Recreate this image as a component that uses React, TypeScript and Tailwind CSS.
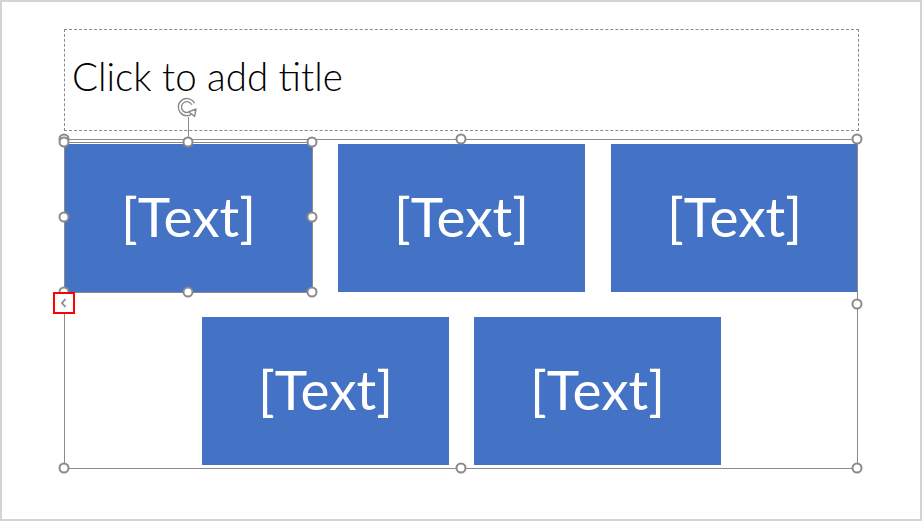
import React from "react";

const frameHandles = [
  "left-[0px] top-[0px]",
  "left-[397px] top-[0px]",
  "left-[793px] top-[0px]",
  "left-[0px] top-[165px]",
  "left-[793px] top-[165px]",
  "left-[0px] top-[329px]",
  "left-[397px] top-[329px]",
  "left-[793px] top-[329px]",
];

const shapeHandles = [
  "left-[0px] top-[3px]",
  "left-[124px] top-[3px]",
  "left-[248px] top-[3px]",
  "left-[0px] top-[78px]",
  "left-[248px] top-[78px]",
  "left-[0px] top-[153px]",
  "left-[124px] top-[153px]",
  "left-[248px] top-[153px]",
];

function Handle({ pos }: { pos: string }) {
  return (
    <div
      className={`absolute ${pos} w-[11px] h-[11px] -translate-x-1/2 -translate-y-1/2 rounded-full bg-white border-2 border-[#8a8a8a]`}
    />
  );
}

function Box({ selected = false }: { selected?: boolean }) {
  return (
    <div className="relative w-[247px] h-[148px] bg-[#4472c4] flex items-center justify-center">
      <span className="text-white text-[55px] leading-none font-['Lato',sans-serif] -mt-[4px]">
        [Text]
      </span>
      {selected && (
        <div className="absolute -left-[1px] -right-[1px] -top-[2px] -bottom-[1px] border border-[#8a8a8a]" />
      )}
    </div>
  );
}

function RotateIcon() {
  const d = "M16.2 7 A7 7 0 1 0 14.9 15";
  return (
    <svg width="22" height="22" viewBox="0 0 22 22">
      <path d={d} fill="none" stroke="#8a8a8a" strokeWidth="4.6" />
      <path d={d} fill="none" stroke="#ffffff" strokeWidth="1.8" />
      <path d="M11.6 14.8 L19 12 L17.6 19.4 Z" fill="#ffffff" stroke="#8a8a8a" strokeWidth="1.4" strokeLinejoin="round" />
    </svg>
  );
}

export default function App() {
  return (
    <div className="w-[924px] h-[522px] bg-white overflow-hidden">
      <div className="w-[922px] h-[521px] border-2 border-[#d4d4d4] bg-white">
        <div className="ml-[62px] mt-[27px] w-[795px] h-[102px] border border-dashed border-[#8a8a8a]">
          <div className="pl-[7px] pt-[27px] text-[38.5px] leading-[38px] text-black font-['Lato',sans-serif] font-light">
            Click to add title
          </div>
        </div>

        <div className="relative ml-[62px] mt-[8px] w-[794px] h-[330px]">
          <div className="flex gap-[26px] pl-[1px] pt-[5px]">
            <Box selected />
            <Box />
            <Box />
          </div>
          <div className="flex gap-[25px] pl-[138px] mt-[25px]">
            <Box />
            <Box />
          </div>

          <div className="absolute inset-0 border border-[#8a8a8a]" />

          {frameHandles.map((p) => (
            <Handle key={"f" + p} pos={p} />
          ))}

          <div className="absolute left-[124px] top-[-22px] w-px h-[25px] bg-[#8a8a8a]" />
          <div className="absolute left-[113px] top-[-42px]">
            <RotateIcon />
          </div>

          {shapeHandles.map((p) => (
            <Handle key={"s" + p} pos={p} />
          ))}

          <div className="absolute left-[-11px] top-[153px] w-[22px] h-[22px] border-2 border-[#ff0000] bg-white flex items-center justify-center">
            <svg width="8" height="12" viewBox="0 0 8 12">
              <path d="M5.5 2 L2 6 L5.5 10" fill="none" stroke="#8a8a8a" strokeWidth="1.8" />
            </svg>
          </div>
        </div>
      </div>
    </div>
  );
}
